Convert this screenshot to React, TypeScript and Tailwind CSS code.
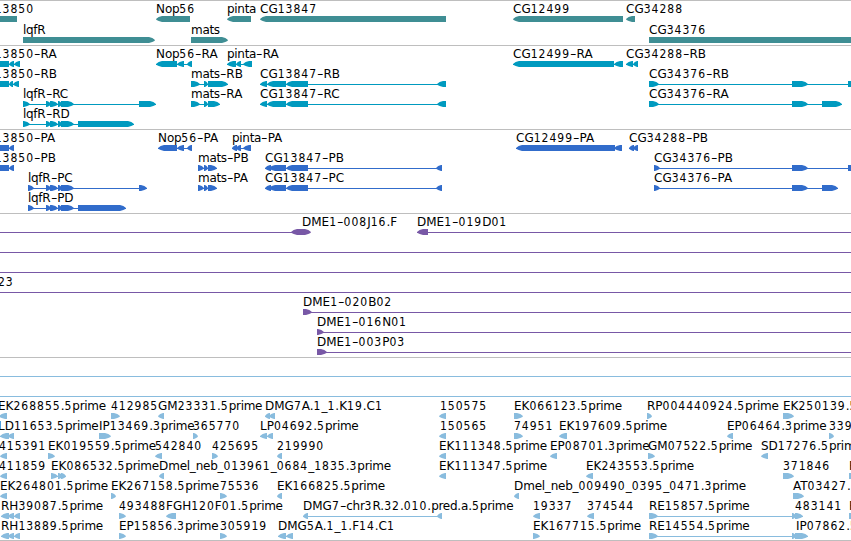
type Block = [number, number];

// A block points from its first coordinate towards its second one.
interface Feature {
    label?: string;
    x: number;
    blocks: Block[];
    line?: Block;
    both?: Block;
}

interface TrackData {
    name: string;
    color: string;
    rowClass: string;
    rows: Feature[][];
}

const f = (label: string, x: number, ...blocks: Block[]): Feature => ({ label, x, blocks });
const span = (from: number, to: number): Feature => ({ x: from, blocks: [], line: [from, to] });

const genes: Feature[][] = [
    [
        f('CG13850', -23, [17, -40]),
        f('Nop56', 156, [190, 156]),
        f('pinta', 227, [251, 227]),
        f('CG13847', 260, [446, 260]),
        f('CG12499', 513, [623, 513]),
        f('CG34288', 626, [635, 626]),
    ],
    [
        f('lqfR', 23, [23, 155]),
        f('mats', 191, [191, 228]),
        f('CG34376', 649, [649, 900]),
    ],
];

const transcripts: Feature[][] = [
    [
        f('CG13850-RA', -23, [9, -20], [14, 9], [20, 14]),
        f('Nop56-RA', 156, [177, 156], [184, 177], [192, 187]),
        f('pinta-RA', 227, [236, 227], [241, 236], [252, 243]),
        f('CG12499-RA', 513, [614, 513], [623, 614]),
        f('CG34288-RB', 626, [633, 626], [638, 633]),
    ],
    [
        f('CG13850-RB', -23, [9, -20], [13, 9], [19, 13]),
        f('mats-RB', 191, [191, 200], [204, 208], [208, 228]),
        f('CG13847-RB', 260, [267, 260], [286, 267], [308, 286], [446, 437]),
        f('CG34376-RB', 649, [649, 659], [792, 808], [848, 900]),
    ],
    [
        f('lqfR-RC', 23, [23, 30], [46, 51], [50, 58], [58, 62], [61, 74], [139, 156]),
        f('mats-RA', 191, [191, 200], [204, 208], [208, 220]),
        f('CG13847-RC', 260, [267, 260], [286, 267], [308, 286], [446, 437]),
        f('CG34376-RA', 649, [649, 659], [792, 808], [822, 842]),
    ],
    [
        f('lqfR-RD', 23, [23, 30], [46, 51], [50, 58], [58, 62], [61, 74], [78, 134]),
    ],
];

const proteins: Feature[][] = [
    [
        f('CG13850-PA', -23, [9, -20], [14, 9]),
        f('Nop56-PA', 158, [177, 158], [184, 177], [192, 187]),
        f('pinta-PA', 232, [237, 232], [241, 236], [251, 243]),
        f('CG12499-PA', 516, [615, 516], [622, 614]),
        f('CG34288-PB', 629, [634, 629], [638, 633]),
    ],
    [
        f('CG13850-PB', -23, [9, -20], [14, 9]),
        f('mats-PB', 198, [198, 204], [204, 208], [208, 217]),
        f('CG13847-PB', 265, [271, 265], [286, 269], [308, 286], [442, 436]),
        f('CG34376-PB', 654, [654, 660], [792, 808], [848, 900]),
    ],
    [
        f('lqfR-PC', 28, [28, 34], [46, 51], [50, 58], [58, 62], [61, 74], [139, 147]),
        f('mats-PA', 198, [198, 204], [204, 208], [208, 217]),
        f('CG13847-PC', 265, [271, 265], [286, 269], [308, 286], [442, 436]),
        f('CG34376-PA', 654, [654, 660], [792, 808], [822, 838]),
    ],
    [
        f('lqfR-PD', 28, [28, 34], [46, 51], [50, 58], [58, 62], [61, 74], [78, 126]),
    ],
];

const bacEnds: Feature[][] = [
    [
        { label: 'DME1-008J16.F', x: 302, blocks: [], line: [-5, 300], both: [291, 311] },
        f('DME1-019D01', 417, [428, 417], [900, 890]),
    ],
    [span(-5, 860)],
    [span(-5, 860)],
    [{ label: '23', x: -2, blocks: [], line: [-5, 860] }],
    [f('DME1-020B02', 303, [303, 312], [890, 900])],
    [f('DME1-016N01', 317, [317, 324], [890, 900])],
    [f('DME1-003P03', 317, [317, 327], [890, 900])],
];

const ests: Feature[][] = [
    [span(-5, 860)],
    [span(-5, 860)],
    [
        f('EK268855.5prime', -2, [7, -1]),
        f('412985', 111, [111, 120]),
        f('GM23331.5prime', 158, [164, 158]),
        f('DMG7A.1_1.K19.C1', 265, [270, 265], [275, 269]),
        f('150575', 440, [446, 439]),
        f('EK066123.5prime', 514, [514, 523]),
        f('RP004440924.5prime', 647, [647, 652]),
        f('EK250139.5prime', 783, [783, 794]),
    ],
    [
        f('LD11653.5prime', -2, [9, 0], [14, 8]),
        f('IP13469.3prime', 99, [99, 111]),
        f('365770', 193, [193, 198]),
        f('LP04692.5prime', 260, [267, 260], [273, 267]),
        f('150565', 440, [446, 439]),
        f('74951', 514, [514, 523]),
        f('EK197609.5prime', 559, [567, 559]),
        f('EP06464.3prime', 727, [733, 727]),
        f('339', 829, [829, 834]),
    ],
    [
        f('415391', -1, [7, 0]),
        f('EK019559.5prime', 48, [48, 55]),
        f('542840', 155, [162, 155]),
        f('425695', 212, [212, 218]),
        f('219990', 277, [282, 277]),
        f('EK111348.5prime', 439, [446, 439]),
        f('EP08701.3prime', 550, [557, 550]),
        f('GM07522.5prime', 648, [648, 655]),
        f('SD17276.5prime', 761, [768, 761]),
    ],
    [
        f('411859', -1, [7, 0]),
        f('EK086532.5prime', 51, [51, 58], [58, 63], [61, 66]),
        f('Dmel_neb_013961_0684_1835.3prime', 159, [164, 159]),
        f('EK111347.5prime', 439, [446, 439]),
        f('EK243553.5prime', 586, [593, 586]),
        f('371846', 783, [783, 794]),
        f('R', 849, [849, 862]),
    ],
    [
        f('EK264801.5prime', 0, [7, 0]),
        f('EK267158.5prime', 111, [111, 116]),
        f('75536', 220, [220, 227]),
        f('EK166825.5prime', 277, [282, 277]),
        f('Dmel_neb_009490_0395_0471.3prime', 514, [519, 514]),
        f('AT03427.5prime', 793, [793, 804]),
    ],
    [
        f('RH39087.5prime', 1, [9, 1], [14, 8], [20, 14]),
        f('493488', 119, [119, 126]),
        f('FGH120F01.5prime', 166, [176, 166]),
        f('DMG7-chr3R.32.010.pred.a.5prime', 303, [308, 303], [442, 437]),
        f('19337', 533, [540, 533]),
        f('374544', 587, [594, 587]),
        f('RE15857.5prime', 649, [649, 658], [792, 796], [795, 803]),
        f('483141', 795),
        f('R', 849, [849, 862]),
    ],
    [
        f('RH13889.5prime', 1, [9, 1], [14, 8], [20, 14]),
        f('EP15856.3prime', 119, [119, 126]),
        f('305919', 220, [220, 227]),
        f('DMG5A.1_1.F14.C1', 278, [286, 278], [293, 286]),
        f('EK167715.5prime', 533, [533, 540]),
        f('RE14554.5prime', 649, [649, 658], [792, 796], [795, 808]),
        f('IP07862.5prime', 796),
    ],
];

const tracks: TrackData[] = [
    { name: 'genes', color: 'text-[#3f8e94]', rowClass: 'h-[21px]', rows: genes },
    { name: 'transcripts', color: 'text-[#009abf] pb-px', rowClass: 'h-5', rows: transcripts },
    { name: 'proteins', color: 'text-[#316ccb] pb-px', rowClass: 'h-5', rows: proteins },
    { name: 'bac-ends', color: 'text-[#7858a6] pb-px', rowClass: 'h-5', rows: bacEnds },
    { name: 'ests', color: 'text-[#89bcde]', rowClass: 'h-5', rows: ests },
];

// Rounded head: the outline bulges a little before it reaches the tip.
function arrowPoints([from, to]: Block) {
    const dir = to > from ? 1 : -1;
    const head = Math.min(Math.abs(to - from) - 1, 6);
    const neck = to - dir * head;
    const mid = to - dir * head * 0.45;
    const nose = to - dir * head * 0.1;
    return `${from},0 ${neck},0 ${mid},1 ${nose},2.4 ${to},3.2 ${nose},4 ${mid},5 ${neck},6 ${from},6`;
}

function Glyph({ feature }: { feature: Feature }) {
    const { blocks, both } = feature;
    const ends = blocks.flat();
    const line = feature.line ?? (blocks.length > 1 ? [Math.min(...ends), Math.max(...ends)] : null);
    return (
        <g>
            {line && <rect x={line[0]} y={3} width={line[1] - line[0]} height={1} shapeRendering="crispEdges" />}
            {blocks.map((block, i) => (
                <polygon key={i} points={arrowPoints(block)} />
            ))}
            {both && (
                <>
                    <polygon points={arrowPoints([both[0] + 10, both[0]])} />
                    <polygon points={arrowPoints([both[0] + 10, both[1]])} />
                </>
            )}
        </g>
    );
}

// Digits are set narrow on a fixed pitch, letters keep their own width.
function Label({ text }: { text: string }) {
    return (
        <>
            {text.split(/(\d+|-|[a-z]+)/).map((part, i) => {
                if (part === '-') {
                    return <span key={i} className="inline-block w-[6.5px] text-center scale-x-150">-</span>;
                }
                if (/\d/.test(part)) {
                    return (
                        <span key={i} className="font-['DejaVu_Sans_Condensed','DejaVu_Sans',sans-serif] font-stretch-condensed tracking-[1px]">
                            {part}
                        </span>
                    );
                }
                return /[a-z]/.test(part) ? <span key={i} className="tracking-[-0.3px]">{part}</span> : part;
            })}
        </>
    );
}

function Row({ features, rowClass }: { features: Feature[]; rowClass: string }) {
    return (
        <div className={`relative shrink-0 ${rowClass}`}>
            <div className="h-[13px]">
                {features.map((feature, i) => (
                    feature.label && (
                        <span
                            key={i}
                            className="absolute top-0 whitespace-nowrap text-[12px] leading-[12px] text-black"
                            style={{ left: feature.x }}
                        >
                            <Label text={feature.label} />
                        </span>
                    )
                ))}
            </div>
            <svg width={851} height={6} className="block fill-current">
                {features.map((feature, i) => (
                    <Glyph key={i} feature={feature} />
                ))}
            </svg>
        </div>
    );
}

function App() {
    return (
        <div className="flex flex-col w-[851px] h-[541px] overflow-hidden bg-white border-b border-[#bebebe] font-['DejaVu_Sans',sans-serif]">
            {tracks.map((track) => (
                <div key={track.name} className={`flex flex-col border-t border-[#bebebe] pt-0.5 ${track.color}`}>
                    {track.rows.map((row, i) => (
                        <Row key={i} features={row} rowClass={track.rowClass} />
                    ))}
                </div>
            ))}
        </div>
    );
}

export default App;
